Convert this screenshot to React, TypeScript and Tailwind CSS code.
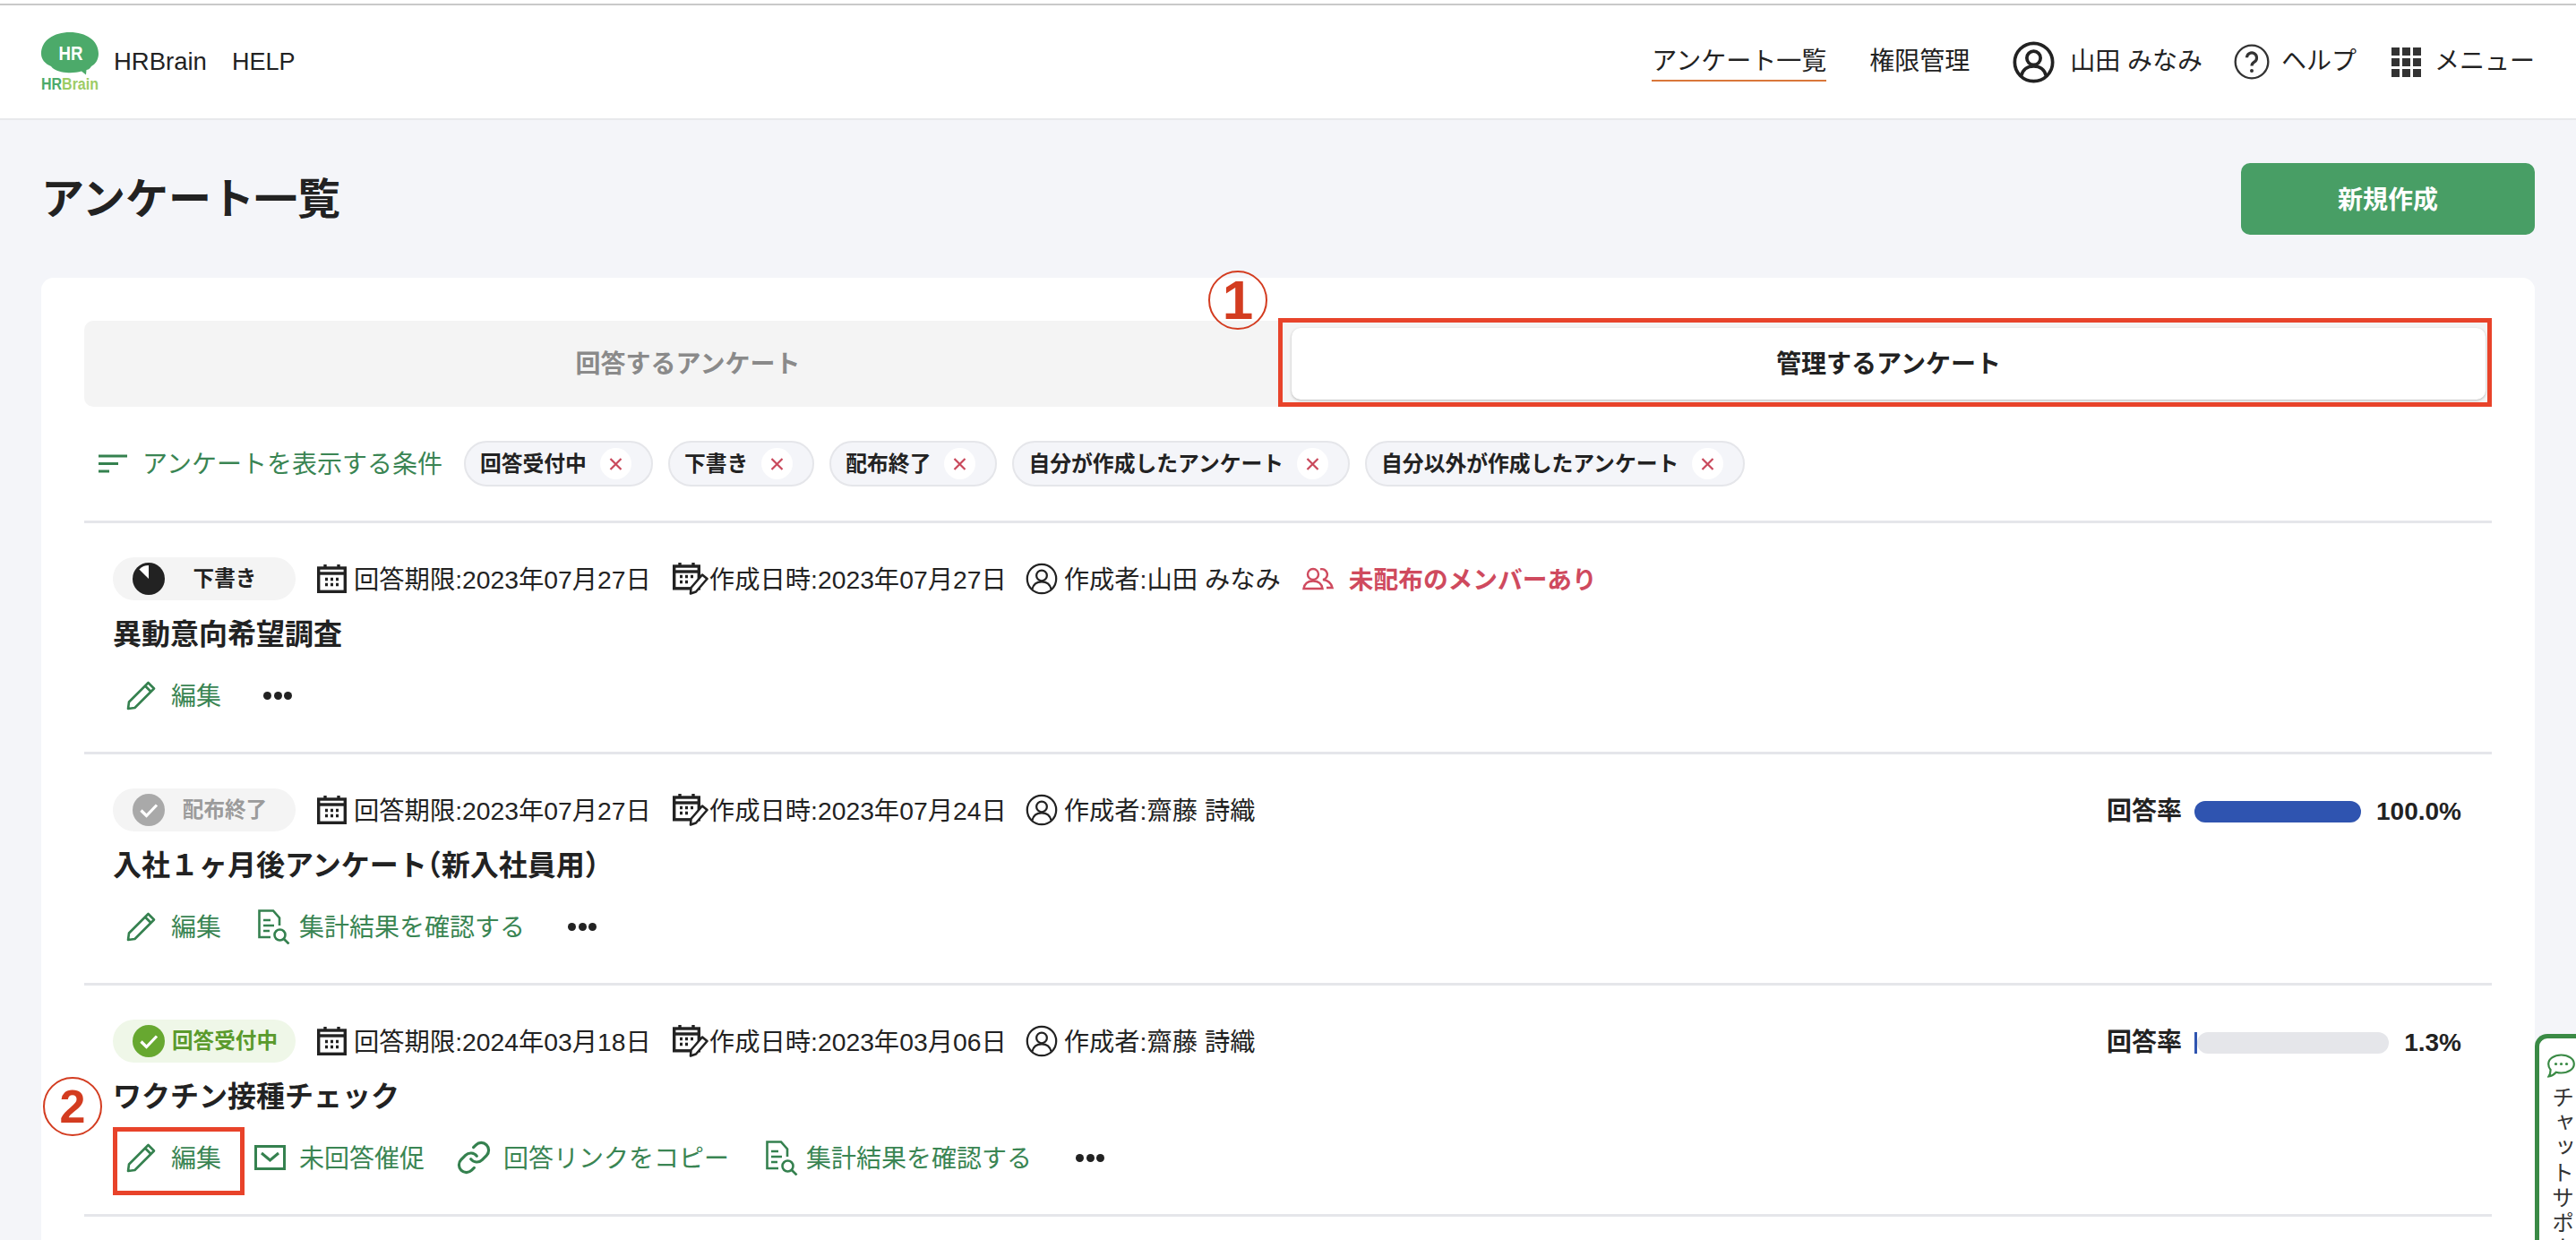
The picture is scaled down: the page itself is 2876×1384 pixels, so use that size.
import { Link } from "lucide-react"
import type { ReactNode } from "react"

const green = "#35814f"

function Logo() {
  return (
    <svg width="64" height="64" viewBox="0 0 64 64" className="-mt-[2px] shrink-0 overflow-visible">
      <path
        d="M32 0C50 0 64 9 64 24C64 31 60 36 56 38C54 41 52 42 50.5 42L50 47.5L45 43.5C40 45 34 45.5 28 45C20 44.5 14 42 11 38C4 35 0 30 0 24C0 9 14 0 32 0Z"
        fill="#4caa6a"
      />
      <text x="19.5" y="31" fontSize="22" fontWeight="700" fill="#fff" textLength="27" lengthAdjust="spacingAndGlyphs">
        HR
      </text>
      <text x="0" y="64" fontSize="18" fontWeight="700" textLength="64" lengthAdjust="spacingAndGlyphs">
        <tspan fill="#4caa6a">HR</tspan>
        <tspan fill="#9ccc65">Brain</tspan>
      </text>
    </svg>
  )
}

function UserIcon({ size, stroke = 1.5 }: { size: number; stroke?: number }) {
  return (
    <svg width={size} height={size} viewBox="0 0 24 24" fill="none" stroke="#222" strokeWidth={stroke} className="shrink-0">
      <circle cx="12" cy="12" r="10.8" />
      <circle cx="12" cy="9.6" r="3.9" />
      <path d="M5 19.6C5.8 16 8.6 14.2 12 14.2C15.4 14.2 18.2 16 19 19.6" />
    </svg>
  )
}

function HelpIcon() {
  return (
    <svg width="40" height="40" viewBox="0 0 24 24" fill="none" stroke="#333" strokeWidth="1.4" className="shrink-0">
      <circle cx="12" cy="12" r="11" />
      <path d="M8.7 9.2a3.3 3.3 0 1 1 5 2.9c-1.1.7-1.7 1.3-1.7 2.6" strokeWidth="1.9" />
      <circle cx="12" cy="18" r="1.2" fill="#333" stroke="none" />
    </svg>
  )
}

function GridIcon() {
  return (
    <div className="grid w-[33px] shrink-0 grid-cols-3 gap-[3px]">
      {Array.from({ length: 9 }).map((_, i) => (
        <span key={i} className="h-[9px] w-[9px] bg-[#333]" />
      ))}
    </div>
  )
}

function CalendarIcon() {
  return (
    <svg width="33" height="32" viewBox="0 0 33 32" fill="none" stroke="#222" className="shrink-0">
      <rect x="1.7" y="4" width="29.6" height="26.3" strokeWidth="3.4" />
      <path d="M1.5 10H31.5" strokeWidth="3.4" />
      <path d="M9 0V5M24 0V5" strokeWidth="3.4" />
      <path d="M9 16.5h3M15 16.5h3M21 16.5h3M9 22.5h3M15 22.5h3M21 22.5h3" strokeWidth="3.4" />
    </svg>
  )
}

function CalendarEditIcon() {
  return (
    <svg width="40" height="36" viewBox="0 0 40 36" fill="none" stroke="#222" className="shrink-0">
      <rect x="1.7" y="4" width="27.6" height="24.8" strokeWidth="3.4" />
      <path d="M1.5 10H29.5" strokeWidth="3.4" />
      <path d="M8 0V5M23 0V5" strokeWidth="3.4" />
      <path d="M8 15.5h3M14 15.5h3M20 15.5h3M8 21.5h3M14 21.5h3" strokeWidth="3.4" />
      <path d="M20 34.5L20.5 28L33 13.5L38.5 18L26 32.5Z" fill="#fff" strokeWidth="2.6" strokeLinejoin="round" />
    </svg>
  )
}

function PencilIcon() {
  return (
    <svg width="33" height="33" viewBox="0 0 33 33" fill="none" stroke={green} strokeWidth="2.6" strokeLinejoin="round" className="shrink-0">
      <path d="M2 31L3 23.5L24.5 2L31 8.5L9.5 30Z" />
      <path d="M21 5.5L27.5 12" />
    </svg>
  )
}

function MailIcon() {
  return (
    <svg width="35" height="28" viewBox="0 0 35 28" fill="none" stroke={green} strokeWidth="3" className="shrink-0">
      <rect x="1.5" y="1.5" width="32" height="25" />
      <path d="M8 9L17.5 17L27 9" />
    </svg>
  )
}

function DocSearchIcon() {
  return (
    <svg width="36" height="39" viewBox="0 0 36 39" fill="none" stroke={green} strokeWidth="2.6" className="shrink-0">
      <path d="M14 31H1.5V1.5H17L24 9.5V18" />
      <path d="M6 12H14M6 18H18M6 24H13" />
      <circle cx="24.5" cy="28.5" r="6" />
      <path d="M29 33L34.5 38.5" />
    </svg>
  )
}

function FilterIcon() {
  return (
    <svg width="32" height="21" viewBox="0 0 32 21" fill="none" stroke={green} strokeWidth="3" className="shrink-0">
      <path d="M0 2H32M0 10.5H22M0 19H12" />
    </svg>
  )
}

function MembersIcon() {
  return (
    <svg width="35" height="28" viewBox="0 0 35 28" fill="none" stroke="#cf4a5e" strokeWidth="2.4" className="shrink-0">
      <circle cx="12" cy="9" r="6" />
      <path d="M1.5 25C2.5 19 7 16.5 12 16.5C17 16.5 21.5 19 22.5 25Z" />
      <path d="M20 3.4A6 6 0 1 1 23 15C27.5 15.5 32 18 33.5 24H27" />
    </svg>
  )
}

function StatusDraft() {
  return (
    <svg width="36" height="36" viewBox="0 0 36 36" className="shrink-0">
      <circle cx="18" cy="18" r="18" fill="#222" />
      <path d="M18 18L18 3A15 15 0 0 0 7.4 7.4Z" fill="#fff" />
    </svg>
  )
}

function StatusCheck({ color }: { color: string }) {
  return (
    <svg width="36" height="36" viewBox="0 0 36 36" fill="none" className="shrink-0">
      <circle cx="18" cy="18" r="18" fill={color} />
      <path d="M9.5 18.5L15.5 24.5L27 12.5" stroke="#fff" strokeWidth="3.2" />
    </svg>
  )
}

function Dots({ className }: { className: string }) {
  return (
    <div className={`flex gap-[2.5px] ${className}`}>
      <span className="h-[9px] w-[9px] rounded-full bg-[#222]" />
      <span className="h-[9px] w-[9px] rounded-full bg-[#222]" />
      <span className="h-[9px] w-[9px] rounded-full bg-[#222]" />
    </div>
  )
}

function ChatIcon() {
  return (
    <svg width="31" height="27" viewBox="0 0 31 27" fill="none" stroke="#3a8a45" strokeWidth="2.2" className="shrink-0">
      <path d="M15.5 1.5C23.5 1.5 29.8 5.8 29.8 11.5C29.8 17.2 23.5 21.5 15.5 21.5C13.5 21.5 11.5 21.2 9.8 20.7C7.8 23 5 25 1.5 25.5C3 23.5 3.6 21.5 3.6 18C2 16.2 1.2 14 1.2 11.5C1.2 5.8 7.5 1.5 15.5 1.5Z" />
      <circle cx="9.5" cy="11.5" r="1.6" fill="#3a8a45" stroke="none" />
      <circle cx="15.5" cy="11.5" r="1.6" fill="#3a8a45" stroke="none" />
      <circle cx="21.5" cy="11.5" r="1.6" fill="#3a8a45" stroke="none" />
    </svg>
  )
}

const chips = ["回答受付中", "下書き", "配布終了", "自分が作成したアンケート", "自分以外が作成したアンケート"]

function Chip({ label }: { label: string }) {
  return (
    <div className="flex h-[51px] items-center rounded-full border-2 border-[#e5e6ea] bg-[#f4f5f9] pl-[16px] pr-[22px]">
      <span className="whitespace-nowrap text-[23.8px] font-bold text-[#222]">{label}</span>
      <span className="ml-[15px] flex h-[35px] w-[35px] items-center justify-center rounded-full bg-white">
        <svg width="15" height="14" viewBox="0 0 15 14" fill="none" stroke="#c9485b" strokeWidth="2.2">
          <path d="M1.5 1L13.5 13M13.5 1L1.5 13" />
        </svg>
      </span>
    </div>
  )
}

function Action({ icon, label, className, labelClass }: { icon: ReactNode; label: string; className: string; labelClass: string }) {
  return (
    <div className={`flex items-center ${className}`}>
      {icon}
      <span className={`whitespace-nowrap pt-[3px] text-[28px] text-[#3a8553] ${labelClass}`}>{label}</span>
    </div>
  )
}

function Rate({ value }: { value: number }) {
  return (
    <div className="ml-auto flex w-[396px] items-center pt-[3px]">
      <span className="text-[28px] font-bold">回答率</span>
      <div className="ml-[14px] flex h-[24px] flex-1">
        <div className={`h-full bg-[#2f54b0] ${value === 100 ? "rounded-full" : ""}`} style={{ width: `${value}%` }} />
        <div className="h-full flex-1 rounded-full bg-[#e5e6ea]" />
      </div>
      <span className="ml-[17px] text-[28px] font-bold">{value === 100 ? "100.0" : value}%</span>
    </div>
  )
}

function Row({
  status,
  deadline,
  created,
  author,
  title,
  warning,
  rate,
  children,
  annotation,
}: {
  status: ReactNode
  deadline: string
  created: string
  author: string
  title: ReactNode
  warning?: boolean
  rate?: number
  children: ReactNode
  annotation?: ReactNode
}) {
  return (
    <div className="relative h-[258px] border-b-[3px] border-[#e5e6ea] pl-[32px] pr-[34px] pt-[38px]">
      <div className="flex h-[48px] items-center text-[28.3px]">
        {status}
        <div className="ml-[24px]">
          <CalendarIcon />
        </div>
        <span className="ml-[8px] whitespace-nowrap pt-[3px]">回答期限:{deadline}</span>
        <div className="ml-[24px]">
          <CalendarEditIcon />
        </div>
        <span className="ml-px whitespace-nowrap pt-[3px]">作成日時:{created}</span>
        <div className="ml-[21px]">
          <UserIcon size={36} />
        </div>
        <span className="ml-[7px] whitespace-nowrap pt-[3px]">作成者:{author}</span>
        {warning && (
          <div className="ml-[24px] flex items-center">
            <MembersIcon />
            <span className="ml-[17px] whitespace-nowrap pt-[3px] text-[27.7px] font-bold text-[#cf4a5e]">未配布のメンバーあり</span>
          </div>
        )}
        {rate !== undefined && <Rate value={rate} />}
      </div>
      <h3 className="mt-[14px] h-[48px] whitespace-nowrap text-[32px] font-bold leading-[48px]">{title}</h3>
      <div className="mt-[16px] flex h-[56px] items-center pl-[15px]">{children}</div>
      {annotation}
    </div>
  )
}

const draftChip = (
  <div className="flex h-[48px] w-[204px] shrink-0 items-center rounded-full bg-[#f4f4f4] pl-[22px] pr-[12px]">
    <StatusDraft />
    <span className="flex-1 pt-[2px] text-center text-[23.6px] font-bold text-[#222]">下書き</span>
  </div>
)
const closedChip = (
  <div className="flex h-[48px] w-[204px] shrink-0 items-center rounded-full bg-[#f4f4f4] pl-[22px] pr-[12px]">
    <StatusCheck color="#a9a9a9" />
    <span className="flex-1 pt-[2px] text-center text-[23.6px] font-bold text-[#9b9b9b]">配布終了</span>
  </div>
)
const openChip = (
  <div className="flex h-[48px] w-[204px] shrink-0 items-center rounded-full bg-[#eff7e8] pl-[22px] pr-[12px]">
    <StatusCheck color="#67a830" />
    <span className="flex-1 pt-[2px] text-center text-[23.6px] font-bold text-[#5a9a2c]">回答受付中</span>
  </div>
)

const edit = <Action icon={<PencilIcon />} label="編集" className="" labelClass="ml-[17px]" />

export default function App() {
  return (
    <div className="relative h-[1384px] overflow-hidden bg-[#f4f5f9] font-['Liberation_Sans','Noto_Sans_CJK_JP',sans-serif] text-[#222]">
      <header className="bg-white">
        <div className="h-[4px]" />
        <div className="h-[2px] bg-[#c9c9c9]" />
        <div className="flex h-[128px] items-center border-b-2 border-[#e8e9ec] pl-[46px] pr-[46px] text-[28px]">
          <Logo />
          <span className="ml-[17px] text-[27.5px]">HRBrain</span>
          <span className="ml-[28px] text-[27px]">HELP</span>
          <nav className="ml-auto flex items-center">
            <span className="relative leading-[40px]">
              アンケート一覧
              <span className="absolute -bottom-[2px] left-0 h-[2.5px] w-full bg-[#d9773a]" />
            </span>
            <span className="ml-[48px]">権限管理</span>
            <div className="ml-[48px]">
              <UserIcon size={47} stroke={1.9} />
            </div>
            <span className="ml-[17px] whitespace-nowrap">山田 みなみ</span>
            <div className="ml-[35px]">
              <HelpIcon />
            </div>
            <span className="ml-[13px]">ヘルプ</span>
            <div className="ml-[39px]">
              <GridIcon />
            </div>
            <span className="ml-[15px]">メニュー</span>
          </nav>
        </div>
      </header>

      <main className="px-[46px] pt-[48px]">
        <div className="flex items-center justify-between">
          <h1 className="pt-[2px] text-[48px] font-bold leading-none">アンケート一覧</h1>
          <button className="h-[80px] w-[328px] rounded-[10px] bg-[#489e65] pt-[3px] text-[28px] font-bold text-white">新規作成</button>
        </div>

        <section className="mt-[48px] rounded-t-[14px] bg-white px-[48px] pb-[100px] pt-[48px]">
          <div className="relative flex h-[96px] rounded-[10px] bg-[#f4f4f4] py-[8px] pr-[7px]">
            <div className="flex w-[1348px] items-center justify-center pt-[2px] text-[28px] font-bold text-[#8a8a8a]">回答するアンケート</div>
            <div className="flex flex-1 items-center justify-center rounded-[10px] bg-white pt-[2px] text-[28px] font-bold shadow-[0_1px_3px_rgba(0,0,0,0.25)]">
              管理するアンケート
            </div>
            <div className="absolute -top-[3px] bottom-0 left-[1333px] right-0 border-[5px] border-[#e8432a]" />
            <div className="absolute -top-[56px] left-[1255px] flex h-[66px] w-[66px] items-center justify-center rounded-full border-2 border-[#d33c20] text-[62px] font-bold leading-none text-[#d33c20]">
              1
            </div>
          </div>

          <div className="mt-[38px] flex items-center pl-[16px]">
            <FilterIcon />
            <span className="ml-[17px] whitespace-nowrap pt-[3px] text-[28px] text-[#3a8553]">アンケートを表示する条件</span>
            <div className="ml-[24px] flex gap-[17px]">
              {chips.map((chip) => (
                <Chip key={chip} label={chip} />
              ))}
            </div>
          </div>

          <div className="mt-[38px] border-t-[3px] border-[#e5e6ea]">
            <Row status={draftChip} deadline="2023年07月27日" created="2023年07月27日" author="山田 みなみ" title="異動意向希望調査" warning>
              {edit}
              <Dots className="ml-[47px]" />
            </Row>
            <Row
              status={closedChip}
              deadline="2023年07月27日"
              created="2023年07月24日"
              author="齋藤 詩織"
              title={
                <>
                  入社１ヶ月後アンケート<span className="[font-feature-settings:'halt']">（</span>新入社員用<span className="[font-feature-settings:'halt']">）</span>
                </>
              }
              rate={100}
            >
              {edit}
              <Action icon={<DocSearchIcon />} label="集計結果を確認する" className="ml-[41px]" labelClass="ml-[10px]" />
              <Dots className="ml-[48px]" />
            </Row>
            <Row
              status={openChip}
              deadline="2024年03月18日"
              created="2023年03月06日"
              author="齋藤 詩織"
              title="ワクチン接種チェック"
              rate={1.3}
              annotation={
                <>
                  <div className="absolute left-[32px] top-[158px] h-[76px] w-[147px] border-[5px] border-[#e8432a]" />
                  <div className="absolute -left-[46px] top-[102px] flex h-[66px] w-[66px] items-center justify-center rounded-full border-2 border-[#d33c20] text-[52px] font-bold leading-none text-[#d33c20]">
                    2
                  </div>
                </>
              }
            >
              {edit}
              <Action icon={<MailIcon />} label="未回答催促" className="ml-[37px]" labelClass="ml-[15px]" />
              <Action icon={<Link size={40} color={green} strokeWidth={1.9} />} label="回答リンクをコピー" className="ml-[35px]" labelClass="ml-[13px]" />
              <Action icon={<DocSearchIcon />} label="集計結果を確認する" className="ml-[41px]" labelClass="ml-[9px]" />
              <Dots className="ml-[49px]" />
            </Row>
          </div>
        </section>
      </main>

      <aside className="fixed bottom-0 right-0 top-[1154px] flex w-[46px] flex-col items-center overflow-hidden rounded-tl-[14px] border-l-[5px] border-t-[5px] border-[#3a8a45] bg-white pl-[7px] pt-[17px]">
        <ChatIcon />
        <span className="mt-[9px] whitespace-nowrap text-[25px] leading-none tracking-[3px] text-[#333] [writing-mode:vertical-rl]">チャットサポート</span>
      </aside>
    </div>
  )
}
